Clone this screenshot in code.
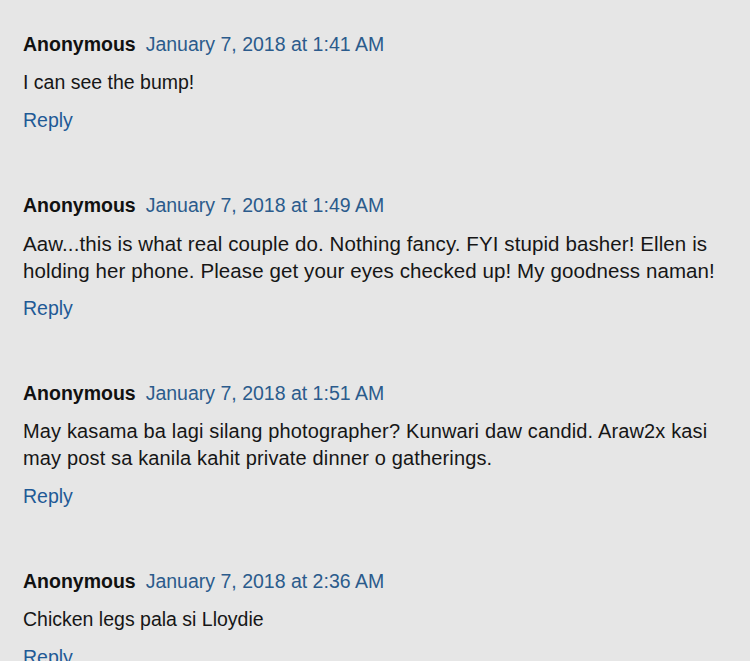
import React from 'react';

const comments = [
  { id: 1, author: 'Anonymous', date: 'January 7, 2018 at 1:41 AM', body: 'I can see the bump!', bodyClass: '' },
  {
    id: 2,
    author: 'Anonymous',
    date: 'January 7, 2018 at 1:49 AM',
    body: 'Aaw...this is what real couple do. Nothing fancy. FYI stupid basher! Ellen is holding her phone. Please get your eyes checked up! My goodness naman!',
    bodyClass: 'text-[20.5px] tracking-[0.1px]',
  },
  {
    id: 3,
    author: 'Anonymous',
    date: 'January 7, 2018 at 1:51 AM',
    body: 'May kasama ba lagi silang photographer? Kunwari daw candid. Araw2x kasi may post sa kanila kahit private dinner o gatherings.',
    bodyClass: 'text-[20px] tracking-[0.15px]',
  },
  { id: 4, author: 'Anonymous', date: 'January 7, 2018 at 2:36 AM', body: 'Chicken legs pala si Lloydie', bodyClass: '' },
];

const Comment = ({ comment }) => (
  <div className="mb-[58px]">
    <div className="leading-[27px] mb-[11px]">
      <span className="font-bold text-[#111]">{comment.author}</span>
      <span className="ml-[10px] text-[#2b5b8c]">{comment.date}</span>
    </div>
    <p className={`leading-[27px] text-[#161616] pr-[20px] ${comment.bodyClass}`}>{comment.body}</p>
    <a href="#" className="block mt-[11px] leading-[27px] text-[#1f5a96]">
      Reply
    </a>
  </div>
);

export default function App() {
  return (
    <div
      className="w-[750px] h-[661px] overflow-hidden bg-[#e6e6e6] pl-[23px] pt-[31px] text-[19.5px]"
      style={{ fontFamily: '"Liberation Sans", Arial, sans-serif' }}
    >
      {comments.map((c) => (
        <Comment key={c.id} comment={c} />
      ))}
    </div>
  );
}
